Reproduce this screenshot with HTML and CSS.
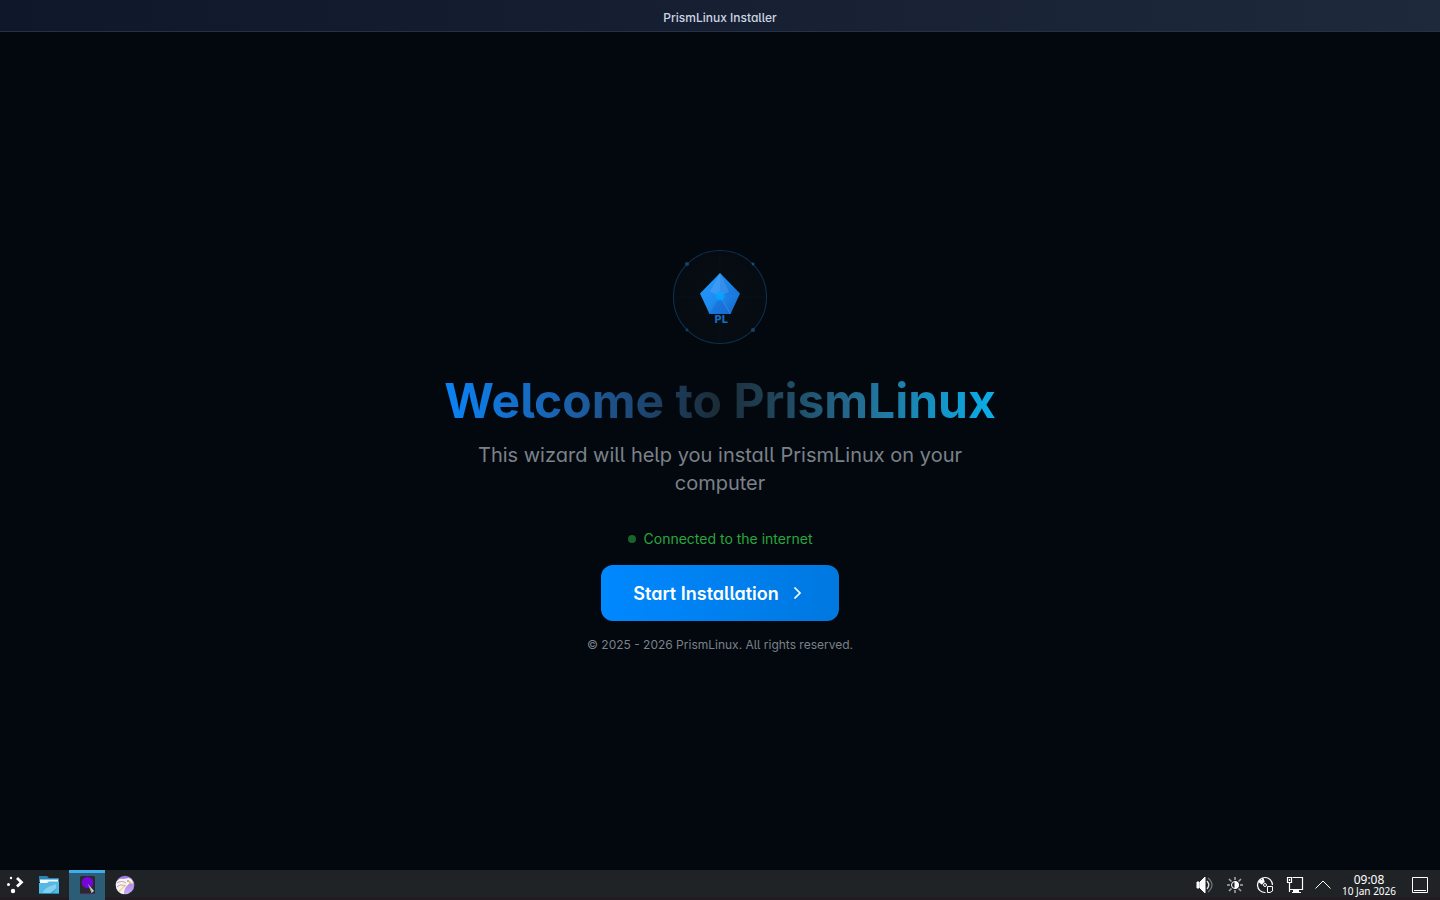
FILE: index.html
```html
<!DOCTYPE html>
<html lang="en">
<head>
<meta charset="utf-8">
<title>PrismLinux Installer</title>
<link rel="stylesheet" href="styles.css">
</head>
<body>
<header class="titlebar">PrismLinux Installer</header>
<main class="welcome">
  <svg class="logo" viewBox="0 0 96 96" role="img" aria-label="PL">
    <defs>
      <linearGradient id="gem" x1="0" y1="0" x2="1" y2="1"><stop offset="0" stop-color="#249cff"/><stop offset=".5" stop-color="#1e8cf0"/><stop offset="1" stop-color="#1762c8"/></linearGradient>
      <radialGradient id="disc"><stop offset="0" stop-color="#080f14"/><stop offset="1" stop-color="#050b11"/></radialGradient>
    </defs>
    <circle cx="48" cy="48" r="46.500" fill="url(#disc)" stroke="#0c2f50" stroke-width="1.100"/>
    <path d="M48 2V94M2 48H94" stroke="#0a151f" stroke-width=".6"/>
    <circle cx="15" cy="15" r="2.100" fill="#1a4066"/><circle cx="81" cy="15" r="1.400" fill="#0b5570"/>
    <circle cx="15" cy="81" r="1.400" fill="#0d4370"/><circle cx="81" cy="81" r="2.100" fill="#1a4066"/>
    <path d="M48 24 68 44.500 58.500 65H37.500L28 44.500Z" fill="url(#gem)"/>
    <path d="M48 24 57 43 48 47 38 42.500Z" fill="#72adf5" opacity=".35"/>
    <path d="M48 24 68 44.500 48 47Z" fill="#1759bf" opacity=".15"/>
    <path d="M48 47 58.500 65H37.500Z" fill="#1769cf" opacity=".45"/>
    <path d="M48 47 58.500 65" stroke="#5aa5f5" stroke-width=".7" opacity=".6"/>
    <circle cx="48" cy="47" r="4.500" fill="#05a6ff" opacity=".8"/>
    <text x="49" y="74" class="logo-text">PL</text>
  </svg>
  <h1>Welcome to PrismLinux</h1>
  <p class="lead">This wizard will help you install PrismLinux on your computer</p>
  <p class="status"><span class="dot"></span>Connected to the internet</p>
  <button class="start" type="button">Start Installation
    <svg class="chevron" viewBox="0 0 20 20" aria-hidden="true"><path d="M7.500 4.500 13 10 7.500 15.500"/></svg>
  </button>
  <p class="copyright">© 2025 - 2026 PrismLinux. All rights reserved.</p>
</main>
<footer class="taskbar">
  <nav class="apps" aria-label="Applications">
    <button class="app menu" type="button" aria-label="Application launcher"><svg viewBox="0 0 22 22"><g fill="#fff"><circle cx="7" cy="4" r="1.200"/><circle cx="4.500" cy="10.500" r="1.500"/><circle cx="9" cy="17" r="2.200"/></g><path d="m13 4 4.500 4.300-4.500 4.200" fill="none" stroke="#fff" stroke-width="2.800"/></svg></button>
    <button class="app" type="button" aria-label="Files"><svg viewBox="0 0 22 22"><path d="M1 2h8l2 2h10v4H1Z" fill="#2784b5"/><path d="M2 5.500h18V10H2Z" fill="#f3f8fa"/><path d="M1 9h8l2-1.500h10V20H1Z" fill="#54b9e4"/><path d="M4 20C7 13 12 12 18 10c1 5-2 9-7 10Z" fill="#85cfec"/><path d="m11 20 8-6-4 6Z" fill="#3ba3d3"/><path d="M1 19h20v1H1Z" fill="#2584b5"/></svg></button>
    <button class="app active" type="button" aria-label="PrismLinux Installer"><svg viewBox="0 0 22 22"><rect x="4" y="0" width="15" height="18" rx="1.500" fill="#27292e"/><path d="M5 18h13" stroke="#5b3c74"/><circle cx="11.500" cy="6.500" r="5.700" fill="#7704db"/><path d="m12 8 6 7-2.500 2Z" fill="#ddd"/><path d="m12 8 4 8" stroke="#666" stroke-width=".6"/></svg></button>
    <button class="app" type="button" aria-label="Web browser"><svg viewBox="0 0 22 22"><defs><linearGradient id="bird" x2="0" y2="1"><stop stop-color="#9876e0"/><stop offset="1" stop-color="#c9adf2"/></linearGradient></defs><circle cx="11" cy="11" r="9.300" fill="url(#bird)"/><path d="M2 9C3 6 6 4 9 5l6-1c3 1 4 3 4 6-2-1-4-1-5 1-3 2-4 5-4 9-5 0-9-5-8-11Z" fill="#f7f2ed"/><path d="M3 9c3-2 6-2 9 0M3 13c3-3 6-2 8-1" fill="none" stroke="#b6a1a8" stroke-width="1"/><path d="m15 7 4 2.500-4-.5Z" fill="#f5bf32"/><circle cx="14" cy="7" r=".7" fill="#4c4150"/><path d="M5 17c3-1 4-5 7-6" fill="none" stroke="#e9b953"/></svg></button>
  </nav>
  <div class="tray">
    <button class="tray-icon" type="button" aria-label="Volume"><svg viewBox="0 0 22 22"><path d="M3 8h2v6H3Zm3 0 5-5v16l-5-5Z" fill="#fff"/><path d="M13 7q3.500 4 0 8" stroke="#ddd" stroke-width="1.400"/><path d="M14 4q8 7 0 14" stroke="#777" stroke-width="1.200"/></svg></button>
    <button class="tray-icon" type="button" aria-label="Brightness"><svg viewBox="0 0 22 22"><circle cx="11" cy="11" r="3.500"/><path d="M11 7.500a3.500 3.500 0 0 1 0 7Z" fill="#fff"/><path d="M11 3v3M11 16v3M3 11h3M16 11h3M5 5l2.500 2.500M14.500 14.500 17 17M17 5l-2.500 2.500M7.500 14.500 5 17" stroke="#aaa" stroke-width="1.500"/></svg></button>
    <button class="tray-icon" type="button" aria-label="Disks"><svg viewBox="0 0 22 22"><path d="M11.500 18.500A7.500 7.500 0 1 1 18.500 11" stroke-width="1.200"/><circle cx="11" cy="11" r="1.500"/><path d="M9.500 9 6 5.500M8.500 10 4.500 7M10 8.500 8.500 4" stroke-width="1.800"/><path d="M13.500 12.500h5V17L16 18.500h-2.500Z" fill="#202326"/></svg></button>
    <button class="tray-icon" type="button" aria-label="Network"><svg viewBox="0 0 22 22"><path d="M8.500 3.500h10v12h-13M3.500 3.500h4v5h-4ZM5.500 8.500V18M5.500 5v2" stroke-width="1.200"/><path d="M9 16h6v2h2v1H8v-1h1Z" fill="#fff" stroke="none"/></svg></button>
    <button class="tray-icon wide" type="button" aria-label="Show hidden icons"><svg viewBox="0 0 22 22"><path d="m3.500 14.500 7.500-7.500 7.500 7.500"/></svg></button>
    <time class="clock" datetime="2026-01-10T09:08"><span class="time">09:08</span><span>10 Jan 2026</span></time>
    <button class="tray-icon desktop" type="button" aria-label="Show desktop"><svg viewBox="0 0 22 22"><path d="M3.500 3.500h15v15h-15ZM5 16.500h12"/></svg></button>
  </div>
</footer>
</body>
</html>
```

FILE: styles.css
```css
* { box-sizing: border-box; }
body {
  margin: 0;
  min-height: 100vh;
  display: flex;
  flex-direction: column;
  background: #03080f;
  font-family: Inter, sans-serif;
  font-feature-settings: "cv05", "cv11";
}
h1, p { margin: 0; }
button { font: inherit; font-feature-settings: inherit; border: 0; padding: 0; background: none; }
svg { display: block; }
.titlebar {
  height: 32px;
  padding-top: 4px;
  display: flex;
  align-items: center;
  justify-content: center;
  background: linear-gradient(90deg, #0f172a, #1e293b);
  border-bottom: 1px solid #253246;
  color: #cbd5e1;
  font-size: 12px;
  font-weight: 500;
}
.welcome {
  flex: 1;
  display: flex;
  flex-direction: column;
  align-items: center;
  justify-content: center;
  text-align: center;
}
.logo { width: 96px; height: 96px; margin-bottom: 24px; }
.logo-text { font: bold 10px "DejaVu Sans", sans-serif; fill: #176bc2; text-anchor: middle; }
h1 {
  padding: 0 2px;
  font-size: 48px;
  line-height: 64px;
  font-weight: 700;
  color: transparent;
  background: linear-gradient(90deg, #0a84f8, #1c5ca0 25%, #1c2b36 50%, #246c92 75%, #0ab0ec);
  background-clip: text;
  -webkit-background-clip: text;
}
.lead {
  max-width: 512px;
  margin-top: 8px;
  color: #7b8188;
  font-size: 20px;
  line-height: 28px;
}
.status {
  display: flex;
  align-items: center;
  gap: 8px;
  margin-top: 32px;
  color: #28a73c;
  font-size: 14px;
  line-height: 20px;
}
.dot { width: 8px; height: 8px; border-radius: 50%; background: #176529; }
.start {
  display: flex;
  align-items: center;
  gap: 8px;
  height: 56px;
  margin-top: 16px;
  padding: 0 32px;
  border-radius: 12px;
  background: linear-gradient(90deg, #0088ff, #0078e0);
  color: #fff;
  font-size: 18px;
  font-weight: 600;
}
.chevron { width: 20px; height: 20px; fill: none; stroke: #fff; stroke-width: 1.700; }
.copyright { margin-top: 16px; color: #7b8188; font-size: 12px; line-height: 16px; }
.taskbar {
  height: 30px;
  display: flex;
  justify-content: space-between;
  background: #202326;
  border-bottom: 3px solid #201c22;
}
.apps, .tray { display: flex; height: 30px; }
.app { width: 36px; display: grid; place-items: center; margin-right: 2px; }
.app svg, .tray-icon svg { width: 22px; height: 22px; }
.menu { width: 29px; }
.active { background: #2d5c76; border-top: 3px solid #3daee9; }
.tray { align-items: center; padding-right: 9px; }
.tray-icon { width: 30px; display: grid; place-items: center; }
.tray-icon svg { fill: none; stroke: #fff; stroke-width: 1; }
.wide { width: 26px; }
.clock {
  width: 66px;
  display: flex;
  flex-direction: column;
  align-items: center;
  color: #fff;
  font: 10px/11px "Noto Sans", sans-serif;
}
.time { font-size: 12px; line-height: 12px; }
.desktop { width: 22px; margin-left: 7px; }
```
